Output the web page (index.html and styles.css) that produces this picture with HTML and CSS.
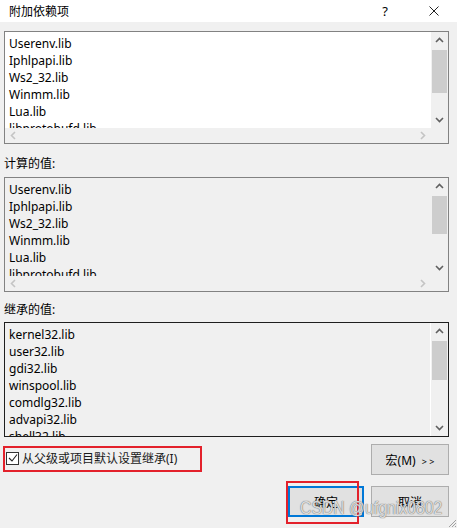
FILE: index.html
```html
<!DOCTYPE html>
<html lang="zh-CN">
<head>
    <meta charset="UTF-8">
    <title>附加依赖项</title>
    <link rel="stylesheet" href="styles.css">
</head>
<body>
    <div class="titlebar">
        <span class="title">附加依赖项</span>
        <span class="help">?</span>
        <svg class="close" width="10" height="10" viewBox="0 0 10 10">
            <path d="M0.5 0.5 L9.5 9.5 M9.5 0.5 L0.5 9.5" stroke="#222" stroke-width="1" fill="none"/>
        </svg>
    </div>

    <div class="dialog">
        <div class="listbox editable">
            <div class="items">
                <div>Userenv.lib</div>
                <div>Iphlpapi.lib</div>
                <div>Ws2_32.lib</div>
                <div>Winmm.lib</div>
                <div>Lua.lib</div>
                <div>libprotobufd.lib</div>
            </div>
            <div class="vscroll">
                <svg class="arrow" viewBox="0 0 17 17"><polyline points="5,10 8.5,6.5 12,10" stroke="#606060" stroke-width="1.6" fill="none"/></svg>
                <div class="thumb t1"></div>
                <svg class="arrow" viewBox="0 0 17 17"><polyline points="5,7 8.5,10.5 12,7" stroke="#606060" stroke-width="1.6" fill="none"/></svg>
            </div>
            <div class="hscroll">
                <svg class="arrow-h" viewBox="0 0 17 15"><polyline points="10,4 6.5,7.5 10,11" stroke="#c4c4c4" stroke-width="1.6" fill="none"/></svg>
                <svg class="arrow-h" viewBox="0 0 17 15"><polyline points="7,4 10.5,7.5 7,11" stroke="#c4c4c4" stroke-width="1.6" fill="none"/></svg>
            </div>
            <div class="corner"></div>
        </div>

        <div class="label label-first">计算的值:</div>
        <div class="listbox readonly">
            <div class="items">
                <div>Userenv.lib</div>
                <div>Iphlpapi.lib</div>
                <div>Ws2_32.lib</div>
                <div>Winmm.lib</div>
                <div>Lua.lib</div>
                <div>libprotobufd.lib</div>
            </div>
            <div class="vscroll">
                <svg class="arrow" viewBox="0 0 17 17"><polyline points="5,10 8.5,6.5 12,10" stroke="#606060" stroke-width="1.6" fill="none"/></svg>
                <div class="thumb t2"></div>
                <svg class="arrow" viewBox="0 0 17 17"><polyline points="5,7 8.5,10.5 12,7" stroke="#606060" stroke-width="1.6" fill="none"/></svg>
            </div>
            <div class="hscroll">
                <svg class="arrow-h" viewBox="0 0 17 15"><polyline points="10,4 6.5,7.5 10,11" stroke="#c4c4c4" stroke-width="1.6" fill="none"/></svg>
                <svg class="arrow-h" viewBox="0 0 17 15"><polyline points="7,4 10.5,7.5 7,11" stroke="#c4c4c4" stroke-width="1.6" fill="none"/></svg>
            </div>
            <div class="corner"></div>
        </div>

        <div class="label label-second">继承的值:</div>
        <div class="listbox inherited">
            <div class="items">
                <div>kernel32.lib</div>
                <div>user32.lib</div>
                <div>gdi32.lib</div>
                <div>winspool.lib</div>
                <div>comdlg32.lib</div>
                <div>advapi32.lib</div>
                <div>shell32.lib</div>
            </div>
            <div class="vscroll">
                <svg class="arrow" viewBox="0 0 17 17"><polyline points="5,10 8.5,6.5 12,10" stroke="#606060" stroke-width="1.6" fill="none"/></svg>
                <div class="thumb t3"></div>
                <svg class="arrow" viewBox="0 0 17 17"><polyline points="5,7 8.5,10.5 12,7" stroke="#606060" stroke-width="1.6" fill="none"/></svg>
            </div>
        </div>

        <div class="row-top">
            <div class="mark-check">
                <label class="check">
                    <span class="box">
                        <svg width="10" height="10" viewBox="0 0 10 10"><polyline points="1,5 4,8 9,1.5" stroke="#222" stroke-width="1.1" fill="none"/></svg>
                    </span>
                    从父级或项目默认设置继承(I)
                </label>
            </div>
            <button class="btn">宏(M) <span class="chev">&gt; &gt;</span></button>
        </div>

        <div class="row-bottom">
            <div class="ok-wrap">
                <button class="btn btn-default">确定</button>
                <div class="mark-ok"></div>
            </div>
            <button class="btn">取消</button>
        </div>
    </div>

    <div class="watermark">CSDN @ufgnix0802</div>
    <svg class="grip" width="10" height="10" viewBox="0 0 10 10">
        <path d="M9 2 L2 9 M9 5 L5 9 M9 8 L8 9" stroke="#a0a0a0" stroke-width="1" fill="none"/>
    </svg>
</body>
</html>
```

FILE: styles.css
```css
body {
    margin: 0;
    width: 457px;
    height: 528px;
    background-color: #f0f0f0;
    font-family: "Noto Sans", "Noto Sans CJK SC", sans-serif;
    font-size: 12px;
    color: #000;
    position: relative;
    overflow: hidden;
}
.titlebar {
    height: 22px;
    background-color: #ffffff;
    display: flex;
    align-items: center;
    padding-left: 9px;
}
.title {
    flex: 1;
    color: #000;
}
.help {
    font-size: 13px;
    margin-right: 41px;
}
.close {
    margin-right: 18px;
}
.dialog {
    padding: 9px 8px 0 4px;
}
.listbox {
    border: 1px solid #828282;
    display: grid;
    grid-template-columns: 1fr 17px;
    grid-template-rows: 96px 15px;
    background-color: #f0f0f0;
}
.listbox.editable .items {
    background-color: #ffffff;
}
.listbox.readonly {
    grid-template-rows: 98px 15px;
}
.listbox.inherited {
    border-color: #1e1e1e;
    grid-template-rows: 113px;
}
.inherited .items {
    border-right: 1px solid #ffffff;
}
.items {
    overflow: hidden;
    padding: 3px 0 0 4px;
    line-height: 17px;
}
.vscroll {
    display: flex;
    flex-direction: column;
}
.arrow {
    width: 17px;
    height: 17px;
    flex: none;
}
.thumb {
    background-color: #cdcdcd;
    margin: 0 1px;
}
.t1 {
    height: 43px;
    margin-top: 1px;
}
.t2 {
    height: 38px;
    margin-top: 1px;
}
.t3 {
    height: 39px;
    margin-top: 1px;
}
.vscroll .arrow:last-child {
    margin-top: auto;
}
.hscroll {
    display: flex;
    justify-content: space-between;
}
.arrow-h {
    width: 17px;
    height: 15px;
}
.label {
    height: 17px;
    line-height: 17px;
}
.label-first {
    margin: 11px 0 5px 0;
}
.label-second {
    margin: 9px 0 4px 0;
}
.row-top {
    display: flex;
    justify-content: space-between;
    align-items: flex-start;
    margin-top: 7px;
}
.mark-check {
    width: 195px;
    height: 22px;
    border: 2px solid #e3212b;
    margin: 2px 0 0 -1px;
}
.check {
    display: flex;
    align-items: center;
    gap: 3px;
    padding: 1px 0 0 1px;
    color: #1a1a1a;
}
.box {
    width: 11px;
    height: 11px;
    border: 1px solid #333;
    background-color: #ffffff;
    display: flex;
    align-items: center;
    justify-content: center;
}
.btn {
    width: 78px;
    height: 31px;
    background-color: #e1e1e1;
    border: 1px solid #adadad;
    font-family: "Noto Sans", "Noto Sans CJK SC", sans-serif;
    font-size: 12px;
    color: #000;
    padding: 0;
    box-sizing: border-box;
}
.chev {
    font-size: 9px;
    margin-left: 3px;
}
.row-bottom {
    display: flex;
    justify-content: flex-end;
    gap: 7px;
    margin-top: 11px;
}
.ok-wrap {
    position: relative;
    height: 31px;
}
.btn-default {
    width: 76px;
    border: 2px solid #0078d7;
}
.mark-ok {
    position: absolute;
    left: -2px;
    top: -5px;
    width: 69px;
    height: 39px;
    border: 2px solid #e3212b;
}
.watermark {
    position: absolute;
    left: 300px;
    top: 497px;
    white-space: nowrap;
    font-family: "Liberation Sans", Arial, sans-serif;
    font-size: 19px;
    color: rgba(255, 255, 255, 0.75);
    text-shadow: 0 0 1px #707070, 0 0 1px #707070;
    transform: scaleX(0.83);
    transform-origin: left top;
}
.grip {
    position: absolute;
    right: 0;
    bottom: 0;
}
```
